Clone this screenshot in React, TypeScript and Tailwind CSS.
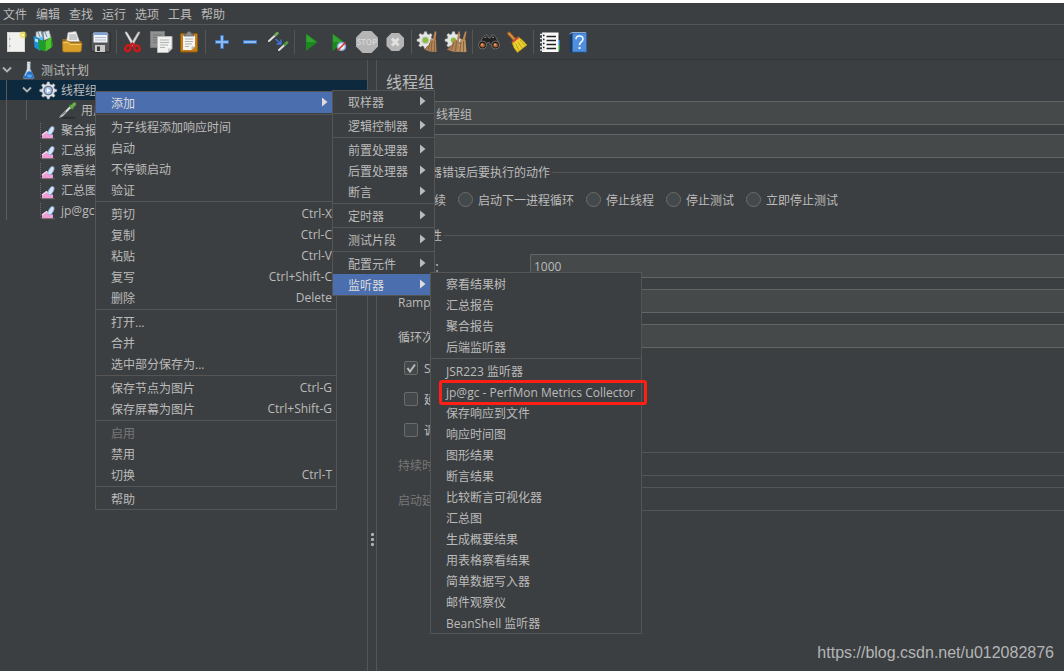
import React, { useState } from 'react';

type MenuEntry = {
  label?: string;
  shortcut?: string;
  disabled?: boolean;
  separator?: boolean;
  highlighted?: boolean;
  marked?: boolean;
  submenu?: boolean;
  children?: MenuEntry[];
};

const SEP: MenuEntry = { separator: true };

const listenerMenu: MenuEntry[] = [
  { label: '察看结果树' },
  { label: '汇总报告' },
  { label: '聚合报告' },
  { label: '后端监听器' },
  SEP,
  { label: 'JSR223 监听器' },
  { label: 'jp@gc - PerfMon Metrics Collector', marked: true },
  { label: '保存响应到文件' },
  { label: '响应时间图' },
  { label: '图形结果' },
  { label: '断言结果' },
  { label: '比较断言可视化器' },
  { label: '汇总图' },
  { label: '生成概要结果' },
  { label: '用表格察看结果' },
  { label: '简单数据写入器' },
  { label: '邮件观察仪' },
  { label: 'BeanShell 监听器' },
];

const addMenu: MenuEntry[] = [
  { label: '取样器', submenu: true },
  SEP,
  { label: '逻辑控制器', submenu: true },
  SEP,
  { label: '前置处理器', submenu: true },
  { label: '后置处理器', submenu: true },
  { label: '断言', submenu: true },
  SEP,
  { label: '定时器', submenu: true },
  SEP,
  { label: '测试片段', submenu: true },
  SEP,
  { label: '配置元件', submenu: true },
  { label: '监听器', submenu: true, highlighted: true, children: listenerMenu },
];

const contextMenu: MenuEntry[] = [
  { label: '添加', submenu: true, highlighted: true, children: addMenu },
  SEP,
  { label: '为子线程添加响应时间' },
  { label: '启动' },
  { label: '不停顿启动' },
  { label: '验证' },
  SEP,
  { label: '剪切', shortcut: 'Ctrl-X' },
  { label: '复制', shortcut: 'Ctrl-C' },
  { label: '粘贴', shortcut: 'Ctrl-V' },
  { label: '复写', shortcut: 'Ctrl+Shift-C' },
  { label: '删除', shortcut: 'Delete' },
  SEP,
  { label: '打开...' },
  { label: '合并' },
  { label: '选中部分保存为...' },
  SEP,
  { label: '保存节点为图片', shortcut: 'Ctrl-G' },
  { label: '保存屏幕为图片', shortcut: 'Ctrl+Shift-G' },
  SEP,
  { label: '启用', disabled: true },
  { label: '禁用' },
  { label: '切换', shortcut: 'Ctrl-T' },
  SEP,
  { label: '帮助' },
];

const menuPlaces = [
  'left-[95px] top-[91px] w-[242px]',
  'left-[236px] -top-[2px] w-[103px]',
  'left-[97px] -top-[2px] w-[212px]',
];

function Menu({ items, level }: { items: MenuEntry[]; level: number }) {
  return (
    <ul role="menu" className={`absolute z-10 border border-[#555555] bg-[#3c3f41] ${menuPlaces[level]}`}>
      {items.map((item, i) =>
        item.separator ? (
          <li key={i} role="separator" className="flex h-[3px] items-center">
            <span className="h-px w-full bg-[#555555]" />
          </li>
        ) : (
          <li key={i} role="none" className="relative">
            <button
              type="button"
              role="menuitem"
              disabled={item.disabled}
              className={`flex h-[21px] w-full items-center justify-between whitespace-nowrap pl-[15px] text-left leading-5 ${
                item.submenu ? 'pr-2' : 'pr-1'
              } ${item.highlighted ? 'bg-[#4b6eaf]' : 'enabled:hover:bg-[#4b6eaf]'} ${
                item.disabled ? 'text-[#777777]' : item.highlighted ? 'text-[#dddddd]' : 'text-[#bbbbbb]'
              }`}
            >
              <span className="pt-0.5">{item.label}</span>
              {item.shortcut && <span>{item.shortcut}</span>}
              {item.submenu && (
                <svg width="6" height="12" viewBox="0 0 6 12" aria-hidden="true">
                  <path d="M0 0.500 L5.500 5 L0 9.500Z" fill="currentColor" />
                </svg>
              )}
            </button>
            {item.marked && (
              <span className="pointer-events-none absolute -bottom-[3px] -right-[6px] -top-px left-2 rounded-[3px] border-3 border-[#ff1f14]" />
            )}
            {item.children && <Menu items={item.children} level={level + 1} />}
          </li>
        ),
      )}
    </ul>
  );
}

const GEAR =
  'M10 0.8 L12.4 0.8 L13 3.4 L15 4.3 L17.3 2.9 L19 4.7 L17.6 7 L18.4 9 L21 9.6 L21 12 L18.4 12.7 L17.6 14.7 L19 17 L17.3 18.7 L15 17.3 L13 18.1 L12.4 20.8 L10 20.8 L9.3 18.1 L7.3 17.3 L5 18.7 L3.3 17 L4.7 14.7 L3.9 12.7 L1.2 12 L1.2 9.6 L3.9 9 L4.7 7 L3.3 4.7 L5 2.9 L7.3 4.3 L9.3 3.4Z';

const toolGroups: { name: string; art: React.ReactNode }[][] = [
  [
    {
      name: '新建',
      art: (
        <>
          <rect x="5.500" y="6.500" width="17" height="19" fill="#f1f1ef" stroke="#d5d5d0" />
          <path d="M7.500 8v16" stroke="#dcdcdc" />
          <path d="M7 13h1.500M7 20h1.500" stroke="#8a8a8a" />
          <circle cx="21" cy="9" r="3.800" fill="#f3e24a" opacity=".4" />
          <circle cx="21" cy="9" r="2.400" fill="#f0dc48" />
          <circle cx="21" cy="9" r="1.200" fill="#fffbd0" />
        </>
      ),
    },
    {
      name: '模板',
      art: (
        <>
          <path d="M6 6l5-1 2 7-7 1zM13 6l6-1.500 2 7-7 3z" fill="#dfe5e8" stroke="#7f8c92" strokeWidth=".7" />
          <path d="M8 6l2 5M15 6l2 5M12 5l1 6" stroke="#6f8ea6" strokeWidth="1" />
          <path d="M3.500 10l6 2v12.500l-5-3z" fill="#1c8fd6" />
          <path d="M9.500 12l3.500-2v13l-3.500 1.500z" fill="#57b9f0" />
          <path d="M5 12.500l3 1v3l-3-1.200z" fill="#bfe4fa" />
          <path d="M8.500 13.500l7 1.500v10.500l-6.500-2z" fill="#1e9e28" />
          <path d="M15.500 15l6-4.500v11l-6 4z" fill="#4cc72b" />
          <path d="M21.500 10.500l1.500 9-1.500 2z" fill="#2b9a1c" />
        </>
      ),
    },
    {
      name: '打开',
      art: (
        <>
          <path d="M4.500 13h5l1 2h13v10h-19z" fill="#9a6a12" />
          <path d="M10 6.500l8-1 3.500 10h-13z" fill="#f3f3f3" stroke="#aaa" strokeWidth=".6" />
          <path d="M11 9h7M11 11h8M11 13h8" stroke="#a0a0a0" />
          <path d="M4.500 16q0-1 1-1h5l2 2h10.500q1.200 0 1 1l-1 7q-.2 1-1.200 1H6q-1 0-1.100-1z" fill="#d99f2b" stroke="#a8771a" strokeWidth=".7" />
          <path d="M5.500 16.500h4.500l2 2h10.500" stroke="#f2cd74" strokeWidth="1" fill="none" />
        </>
      ),
    },
    {
      name: '保存',
      art: (
        <>
          <path d="M6 6.500h17q1 0 1 1v17.500q0 1-1 1H7l-2-2V7.500q0-1 1-1z" fill="#555657" stroke="#222" strokeWidth=".8" />
          <rect x="7.500" y="6.500" width="14" height="10" fill="#eef2f8" />
          <rect x="7.500" y="6.500" width="14" height="2.500" fill="#7fa2d8" />
          <path d="M9 11.500h11M9 14h11" stroke="#b4bcc8" />
          <rect x="9" y="19" width="10" height="7" fill="#c9c9c9" />
          <rect x="11" y="20.500" width="3" height="4.500" fill="#3a3a3a" />
        </>
      ),
    },
  ],
  [
    {
      name: '剪切',
      art: (
        <>
          <path d="M6 6.500q1-1.500 2.200 0l7.300 12-2 1.500z" fill="#ececec" stroke="#9a9a9a" strokeWidth=".6" />
          <path d="M21 6.500q-1-1.500-2.200 0l-7.300 12 2 1.500z" fill="#dcdcdc" stroke="#9a9a9a" strokeWidth=".6" />
          <ellipse cx="9" cy="22.300" rx="2.500" ry="3" transform="rotate(35 9 22.300)" fill="none" stroke="#d01818" strokeWidth="2.400" />
          <ellipse cx="18" cy="22.300" rx="2.500" ry="3" transform="rotate(-35 18 22.300)" fill="none" stroke="#d01818" strokeWidth="2.400" />
          <path d="M11 20l2.500-2.500L16 20" stroke="#d01818" strokeWidth="2" fill="none" />
        </>
      ),
    },
    {
      name: '复制',
      art: (
        <>
          <rect x="3.500" y="5.500" width="14" height="16" fill="#8f9291" stroke="#777a79" />
          <path d="M6 9h9M6 11.500h9M6 14h9M6 16.500h5" stroke="#737675" />
          <path d="M10.500 10.500h14.500v12l-4 4H10.500z" fill="#f1f2f0" stroke="#b5b8b4" />
          <path d="M13 14h9M13 16.500h9M13 19h8M13 21.500h5" stroke="#b0b3b0" />
          <path d="M25 22.500h-4v4z" fill="#c9ccc9" />
        </>
      ),
    },
    {
      name: '粘贴',
      art: (
        <>
          <rect x="5.500" y="7.500" width="17" height="18.500" rx="1" fill="#c57e1c" stroke="#8d5608" />
          <path d="M8 9.500h12v11l-3.500 3.500H8z" fill="#f4f4f2" />
          <path d="M10 13h8M10 15.500h8M10 18h7M10 20.500h4" stroke="#b0b3b0" />
          <path d="M20 20.500h-3.500V24z" fill="#b9bbb8" />
          <path d="M9 10V8.500L11.500 8q0-2.500 2.500-2.500T16.500 8l2.500.5V10z" fill="#8d9090" stroke="#55585a" strokeWidth=".7" />
        </>
      ),
    },
  ],
  [
    {
      name: '展开全部',
      art: <path d="M12.500 9.500h3v5h5v3h-5v5h-3v-5h-5v-3h5z" fill="#8ebbec" stroke="#3c74bd" />,
    },
    {
      name: '折叠全部',
      art: <rect x="7.500" y="14.500" width="13" height="3" fill="#8ebbec" stroke="#3c74bd" />,
    },
    {
      name: '切换',
      art: (
        <>
          <path d="M5 15L11 9.500" stroke="#dfe2df" strokeWidth="2" strokeLinecap="round" />
          <path d="M11.500 9l1.800-1.800" stroke="#6cab57" strokeWidth="2.800" strokeLinecap="round" />
          <path d="M15 24L20.500 19" stroke="#dfe2df" strokeWidth="2" strokeLinecap="round" />
          <path d="M21 18.500l2-2" stroke="#4f9a42" strokeWidth="2.800" strokeLinecap="round" />
          <path d="M11.500 13l5 4.500M17 13.500v4.500h-4.500" stroke="#3d7be0" strokeWidth="1.300" fill="none" />
        </>
      ),
    },
  ],
  [
    {
      name: '启动',
      art: (
        <>
          <path d="M9 7.500L20.500 16L9 25z" fill="#1b8a1e" />
          <path d="M9.500 8.500L19 16h-9.500z" fill="#45b041" opacity=".6" />
        </>
      ),
    },
    {
      name: '不停顿启动',
      art: (
        <>
          <path d="M7.500 7.500L19 16L7.500 25z" fill="#1b8a1e" />
          <path d="M8 8.500L17.500 16H8z" fill="#45b041" opacity=".6" />
          <circle cx="16.500" cy="20.500" r="4" fill="#e9edf4" stroke="#7ea1d2" strokeWidth="1.500" />
          <path d="M12.500 24.500l8-8" stroke="#d8342c" strokeWidth="1.600" />
        </>
      ),
    },
    {
      name: '停止',
      art: (
        <>
          <path d="M9.500 5h9l6.500 6.500v9L18.500 27h-9L3 20.500v-9z" fill="#b5b5b5" />
          <text x="14" y="19" textAnchor="middle" fontSize="8" fontWeight="600" fill="#d6d6d6">STOP</text>
        </>
      ),
    },
    {
      name: '关闭',
      art: (
        <>
          <path d="M10.500 7h7.500l5 5v8l-5 5h-7.500l-5-5v-8z" fill="#b5b5b5" />
          <path d="M11 12.500l6.500 7M17.500 12.500l-6.500 7" stroke="#e0e0e0" strokeWidth="3" />
        </>
      ),
    },
  ],
  [
    {
      name: '清除',
      art: (
        <>
          <g transform="translate(2 5) scale(.85)">
            <path d={GEAR} fill="#e6e6e4" stroke="#b5b5b5" strokeWidth=".6" />
          </g>
          <circle cx="11.400" cy="14.200" r="3.800" fill="#bfc4ba" />
          <circle cx="11.400" cy="14.200" r="2.600" fill="#86bd3f" />
          <path d="M20.500 5.500h2l-1 9-2.500-1z" fill="#b98252" />
          <path d="M16.500 13l5.500 1 .5 12q-6 .5-12-2.500 5-3.500 6-10.500z" fill="#b08457" />
          <path d="M16 17l-2 7M18 15l-1 10.500M20.500 15v11M14 20l-3 3" stroke="#7f5a35" strokeWidth=".8" />
        </>
      ),
    },
    {
      name: '清除全部',
      art: (
        <>
          <g transform="translate(2 5) scale(.85)">
            <path d={GEAR} fill="#e6e6e4" stroke="#b5b5b5" strokeWidth=".6" />
          </g>
          <circle cx="11.400" cy="14.200" r="2.600" fill="#86bd3f" />
          <path d="M16.500 5.500h1.500l-1 9-2-1zM23 5.500h1.500l-1.500 9-2.500-1z" fill="#b98252" />
          <path d="M12.500 13.500l4.500.5v12q-6 .5-12-2.500 5-4 7.500-10z" fill="#b08457" />
          <path d="M18.500 13l5 1 1 12q-6 .5-9-1 2.500-5 3-12z" fill="#bd9263" />
          <path d="M12 16l-3 8M14.500 15l-1 10M19 16l-1 9M21.500 15v11M9 20l-3 3" stroke="#7f5a35" strokeWidth=".8" />
        </>
      ),
    },
  ],
  [
    {
      name: '搜索',
      art: (
        <>
          <path d="M8.500 10.500q1-2 4-1.500l1 3h2l1-3q3-.5 4 1.500l4 8h-9l-1-2h-2l-1 2H3.500z" fill="#222" stroke="#7a7a7a" strokeWidth=".7" />
          <circle cx="7.500" cy="19" r="4" fill="#1a1a1a" stroke="#707070" />
          <circle cx="20.500" cy="19" r="4" fill="#1a1a1a" stroke="#707070" />
          <circle cx="7.500" cy="19.300" r="2.300" fill="#b4622c" />
          <circle cx="20.500" cy="19.300" r="2.300" fill="#b4622c" />
          <circle cx="7" cy="18.500" r=".9" fill="#eab58a" />
          <circle cx="20" cy="18.500" r=".9" fill="#eab58a" />
          <path d="M9.500 11.500l2-.5M17 11l2 .5" stroke="#999" />
        </>
      ),
    },
    {
      name: '重置搜索',
      art: (
        <>
          <path d="M6 7.500l6 6.500" stroke="#a8601b" strokeWidth="3.600" strokeLinecap="round" />
          <path d="M6 7.500l5 5.500" stroke="#e09a4b" strokeWidth="1.400" strokeLinecap="round" />
          <path d="M9 16l6.500-5q5 3.500 8.500 8l-9.500 7.500Q10 22 9 16z" fill="#ecd02f" stroke="#a88a10" strokeWidth=".8" />
          <path d="M8.800 15.500l6.200-5 1.300 1.500-6.300 5z" fill="#d8463a" />
          <path d="M12.500 17.500l3.500 7M15 16l4 6M17 14l5 5.500" stroke="#b79a1c" strokeWidth=".9" />
        </>
      ),
    },
  ],
  [
    {
      name: '函数助手',
      art: (
        <>
          <path d="M21 9h3v5h-3z" fill="#333" />
          <path d="M21 14h3v5h-3z" fill="#2e74d0" />
          <path d="M21 19h3v5.500h-3z" fill="#2c9c39" />
          <rect x="6" y="6.500" width="16.500" height="19.500" fill="#fafafa" />
          <path d="M10.500 10.500h9.500M10.500 14.500h9.500M10.500 18.500h9.500M10.500 22.500h9.500" stroke="#222" strokeWidth="1.300" />
          <path d="M4 8.500h4.500M4 12.500h4.500M4 16.500h4.500M4 20.500h4.500M4 24h4.500" stroke="#dedede" strokeWidth="1.600" />
          <path d="M7 9.500h1.500M7 13.500h1.500M7 17.500h1.500M7 21.500h1.500" stroke="#222" strokeWidth="1.400" />
        </>
      ),
    },
    {
      name: '帮助',
      art: (
        <>
          <path d="M5.500 8l2-2h14.500v19l-2 1.500H5.500z" fill="#1f3a5f" />
          <rect x="8.500" y="7" width="14" height="19" fill="#4f8fdd" stroke="#2c62a8" strokeWidth=".8" />
          <path d="M5.500 8l2.500-1.500h14" stroke="#a9c4e4" strokeWidth=".8" fill="none" />
          <path d="M12 13.200q0-3.200 3.500-3.200t3.500 3q0 1.800-1.800 3-1.700 1.200-1.700 3.200" stroke="#eef5ff" strokeWidth="1.600" fill="none" />
          <rect x="14.600" y="21" width="1.900" height="2" fill="#eef5ff" />
        </>
      ),
    },
  ],
];

function Toolbar() {
  return (
    <div role="toolbar" className="flex h-[35px] shrink-0 items-center border-b border-[#323436] pl-0.5">
      {toolGroups.map((group, g) => (
        <React.Fragment key={g}>
          {g > 0 && (
            <span className="flex w-[5px] justify-center">
              <span className="h-6 w-px bg-[#555555]" />
            </span>
          )}
          {group.map((tool) => (
            <button key={tool.name} type="button" aria-label={tool.name} className="h-8 w-7">
              <svg width="28" height="32" viewBox="0 0 28 32" aria-hidden="true">
                {tool.art}
              </svg>
            </button>
          ))}
        </React.Fragment>
      ))}
    </div>
  );
}

function Chevron() {
  return (
    <svg width="10" height="20" viewBox="0 0 10 20" aria-hidden="true">
      <path d="M1 7.500l4 4 4-4" fill="none" stroke="#b4b4b4" strokeWidth="1.800" />
    </svg>
  );
}

function FlaskIcon() {
  return (
    <svg width="20" height="20" viewBox="0 0 20 20" aria-hidden="true">
      <path d="M9 3h3.500v6l3.500 8q.6 1.800-1 1.800H6.500q-1.600 0-1-1.800L9 9z" fill="#c9d3dc" stroke="#65717c" strokeWidth=".6" />
      <path d="M8 11.500h5.500l2.300 5.500q.5 1.500-.8 1.500H6.500q-1.300 0-.8-1.500z" fill="#2374c9" />
      <path d="M9.500 3.500h1.200v6L7.500 16l-.8-.5L9.500 9z" fill="#f1f6fb" opacity=".7" />
      <path d="M9 2.500h3.500" stroke="#e4e4e4" strokeWidth="1.500" />
      <ellipse cx="11.500" cy="16" rx="2.600" ry="1.400" fill="#5ba6ea" />
    </svg>
  );
}

function GearIcon() {
  return (
    <svg width="20" height="20" viewBox="0 0 20 20" aria-hidden="true">
      <g transform="translate(.7 1.200) scale(.86)">
        <path d={GEAR} fill="#e2e3e4" stroke="#9aa0a6" strokeWidth=".7" />
      </g>
      <circle cx="10.200" cy="10.500" r="4.800" fill="#5f7596" />
      <circle cx="10.200" cy="10.500" r="3.400" fill="#a9c2e6" />
      <path d="M9 8.200l3.600 2.300L9 12.800z" fill="#fff" />
    </svg>
  );
}

function PipetteIcon() {
  return (
    <svg width="20" height="20" viewBox="0 0 20 20" aria-hidden="true">
      <ellipse cx="10" cy="17.800" rx="8" ry="1" fill="#2a2c2d" />
      <path d="M3.500 16L12 7.500" stroke="#d9dedb" strokeWidth="2.200" strokeLinecap="round" />
      <path d="M1.500 17.500L4.500 15" stroke="#a7aaa8" strokeWidth="1.200" />
      <path d="M4.500 14.500L8 11.500" stroke="#55585a" strokeWidth="1" />
      <path d="M11.500 5l4 4" stroke="#3f7f2f" strokeWidth="1.800" />
      <path d="M13.500 7l3-3" stroke="#66ab4c" strokeWidth="3.400" strokeLinecap="round" />
    </svg>
  );
}

function ListenerIcon() {
  return (
    <svg width="20" height="20" viewBox="0 0 20 20" aria-hidden="true">
      <path d="M2.500 3v15" stroke="#6b6b6b" strokeDasharray="1 1" />
      <path d="M4 18.500V15l4.500-3.500L11 14l4 .5v4z" fill="#f09fd6" />
      <path d="M4 15l4.500-3.500L11 14" fill="none" stroke="#fbe3f3" strokeWidth="1.200" />
      <ellipse cx="13" cy="10.700" rx="2.200" ry="4.600" transform="rotate(28 13 10.700)" fill="#d5e4f8" stroke="#8fb0dc" strokeWidth=".8" />
      <path d="M3 18.700h14" stroke="#6a6c6e" strokeWidth=".7" />
    </svg>
  );
}

function TreeRow({ depth, open, selected, icon, label }: { depth: number; open?: boolean; selected?: boolean; icon: React.ReactNode; label: string }) {
  return (
    <li role="treeitem" aria-selected={!!selected} className={`flex h-5 items-center whitespace-nowrap pl-0.5 ${selected ? 'bg-[#0d293e]' : ''}`}>
      {Array.from({ length: depth }, (_, i) => (
        <span key={i} className="flex h-5 w-5 shrink-0 pl-1">
          {(i === 0 || depth === 2) && <span className="h-full w-px bg-[#5a5c5e]" />}
        </span>
      ))}
      <span className="flex w-4 shrink-0">{open && <Chevron />}</span>
      <span className="shrink-0">{icon}</span>
      <span className="pl-[3px] pt-0.5 leading-5">{label}</span>
    </li>
  );
}

const radioOptions = ['继续', '启动下一进程循环', '停止线程', '停止测试', '立即停止测试'];

function SectionTitle({ children }: { children: React.ReactNode }) {
  return (
    <legend className="flex h-5 w-full items-center gap-[2px] pl-2 leading-5">
      <span className="shrink-0 pt-0.5">{children}</span>
      <span className="h-px grow bg-[#555555]" />
    </legend>
  );
}

function FieldRow({ id, label, value, disabled }: { id: string; label: string; value: string; disabled?: boolean }) {
  return (
    <div className="flex h-6 items-center pl-3">
      <label htmlFor={id} className={`w-[132px] shrink-0 whitespace-nowrap pt-[3px] ${disabled ? 'text-[#777777]' : ''}`}>
        {label}
      </label>
      <input
        id={id}
        defaultValue={value}
        disabled={disabled}
        className={`h-6 min-w-0 grow border-y border-l px-[3px] outline-none ${
          disabled ? 'border-[#555555] bg-[#3c3f41]' : 'border-[#646464] bg-[#45494a]'
        }`}
      />
    </div>
  );
}

function CheckRow({ label, checked }: { label: string; checked?: boolean }) {
  return (
    <label className="flex h-[31px] items-center gap-[6px] pl-[18px]">
      <span className="grid">
        <input
          type="checkbox"
          defaultChecked={checked}
          className="peer col-start-1 row-start-1 size-[14px] appearance-none rounded-[2px] border border-[#6b6b6b] bg-[#43494a]"
        />
        <svg className="pointer-events-none invisible col-start-1 row-start-1 peer-checked:visible" width="14" height="14" viewBox="0 0 14 14" aria-hidden="true">
          <path d="M3.500 7l2.500 3.500L11 3.500" fill="none" stroke="#bbbbbb" strokeWidth="2" />
        </svg>
      </span>
      <span className="whitespace-nowrap pt-0.5">{label}</span>
    </label>
  );
}

function ThreadGroupForm() {
  const [action, setAction] = useState(0);
  return (
    <form className="flex min-w-0 grow flex-col border-l border-[#555555] pl-[9px] pt-[11px]">
      <h1 className="text-base leading-[22px]">线程组</h1>
      <div className="mt-2 flex items-center">
        <label htmlFor="name" className="w-[45px] shrink-0">名称：</label>
        <input id="name" defaultValue="线程组" className="h-6 min-w-0 grow border-y border-l border-[#646464] bg-[#45494a] px-1 pt-0.5 outline-none" />
      </div>
      <div className="mt-[9px] flex items-center">
        <label htmlFor="comment" className="w-[45px] shrink-0">注释：</label>
        <input id="comment" className="h-6 min-w-0 grow border-y border-l border-[#646464] bg-[#45494a] px-1 pt-0.5 outline-none" />
      </div>
      <fieldset className="mt-1">
        <SectionTitle>在取样器错误后要执行的动作</SectionTitle>
        <div className="mt-[7px] flex gap-3 pl-4">
          {radioOptions.map((option, i) => (
            <label key={option} className="flex h-5 shrink-0 items-center gap-[5px]">
              <input
                type="radio"
                name="on-error"
                checked={action === i}
                onChange={() => setAction(i)}
                className="size-[15px] appearance-none rounded-full border border-[#6b6b6b] bg-[#43494a] checked:border-4 checked:border-[#6b6b6b] checked:bg-[#bbbbbb]"
              />
              <span className="pt-[3px]">{option}</span>
            </label>
          ))}
        </div>
      </fieldset>
      <fieldset className="mt-4">
        <SectionTitle>线程属性</SectionTitle>
        <div className="mt-[9px] flex flex-col gap-[11px]">
          <FieldRow id="threads" label="线程数：" value="1000" />
          <FieldRow id="ramp" label="Ramp-Up时间（秒）：" value="1" />
          <FieldRow id="loops" label="循环次数" value="1" />
        </div>
        <div className="mt-1">
          <CheckRow label="Same user on each iteration" checked />
          <CheckRow label="延迟创建线程直到需要" />
          <CheckRow label="调度器" />
        </div>
        <div className="mt-[7px] flex flex-col gap-[11px]">
          <FieldRow id="duration" label="持续时间（秒）" value="" disabled />
          <FieldRow id="delay" label="启动延迟（秒）" value="" disabled />
        </div>
      </fieldset>
    </form>
  );
}

export default function App() {
  return (
    <div className="relative flex min-h-screen flex-col overflow-hidden border-t-3 border-white bg-[#3c3f41] font-['Open_Sans','Noto_Sans_CJK_SC',sans-serif] text-xs text-[#bbbbbb]">
      <nav className="flex h-[22px] shrink-0 items-center gap-[9px] border-b border-[#555555] pl-[3px]">
        {['文件', '编辑', '查找', '运行', '选项', '工具', '帮助'].map((name) => (
          <button key={name} type="button" className="pt-0.5 leading-5">
            {name}
          </button>
        ))}
      </nav>
      <Toolbar />
      <main className="flex grow">
        <ul role="tree" className="w-[367px] shrink-0">
          <TreeRow depth={0} open icon={<FlaskIcon />} label="测试计划" />
          <TreeRow depth={1} open selected icon={<GearIcon />} label="线程组" />
          <TreeRow depth={2} icon={<PipetteIcon />} label="用户定义的变量" />
          <TreeRow depth={1} icon={<ListenerIcon />} label="聚合报告" />
          <TreeRow depth={1} icon={<ListenerIcon />} label="汇总报告" />
          <TreeRow depth={1} icon={<ListenerIcon />} label="察看结果树" />
          <TreeRow depth={1} icon={<ListenerIcon />} label="汇总图" />
          <TreeRow depth={1} icon={<ListenerIcon />} label="jp@gc - PerfMon Metrics Collector" />
        </ul>
        <div role="separator" className="flex w-[9px] shrink-0 flex-col items-center gap-[2px] border-l border-[#555555] pt-[473px]">
          <span className="size-[3px] rounded-[1px] bg-[#b0b0b0]" />
          <span className="size-[3px] rounded-[1px] bg-[#b0b0b0]" />
          <span className="size-[3px] rounded-[1px] bg-[#b0b0b0]" />
        </div>
        <ThreadGroupForm />
      </main>
      <div className="absolute left-0 right-0 -top-[3px]">
        <Menu items={contextMenu} level={0} />
      </div>
      <p className="absolute bottom-2 right-[10px] font-['Liberation_Sans',sans-serif] text-base leading-5 text-[#b4b5b6]">
        https://blog.csdn.net/u012082876
      </p>
    </div>
  );
}
